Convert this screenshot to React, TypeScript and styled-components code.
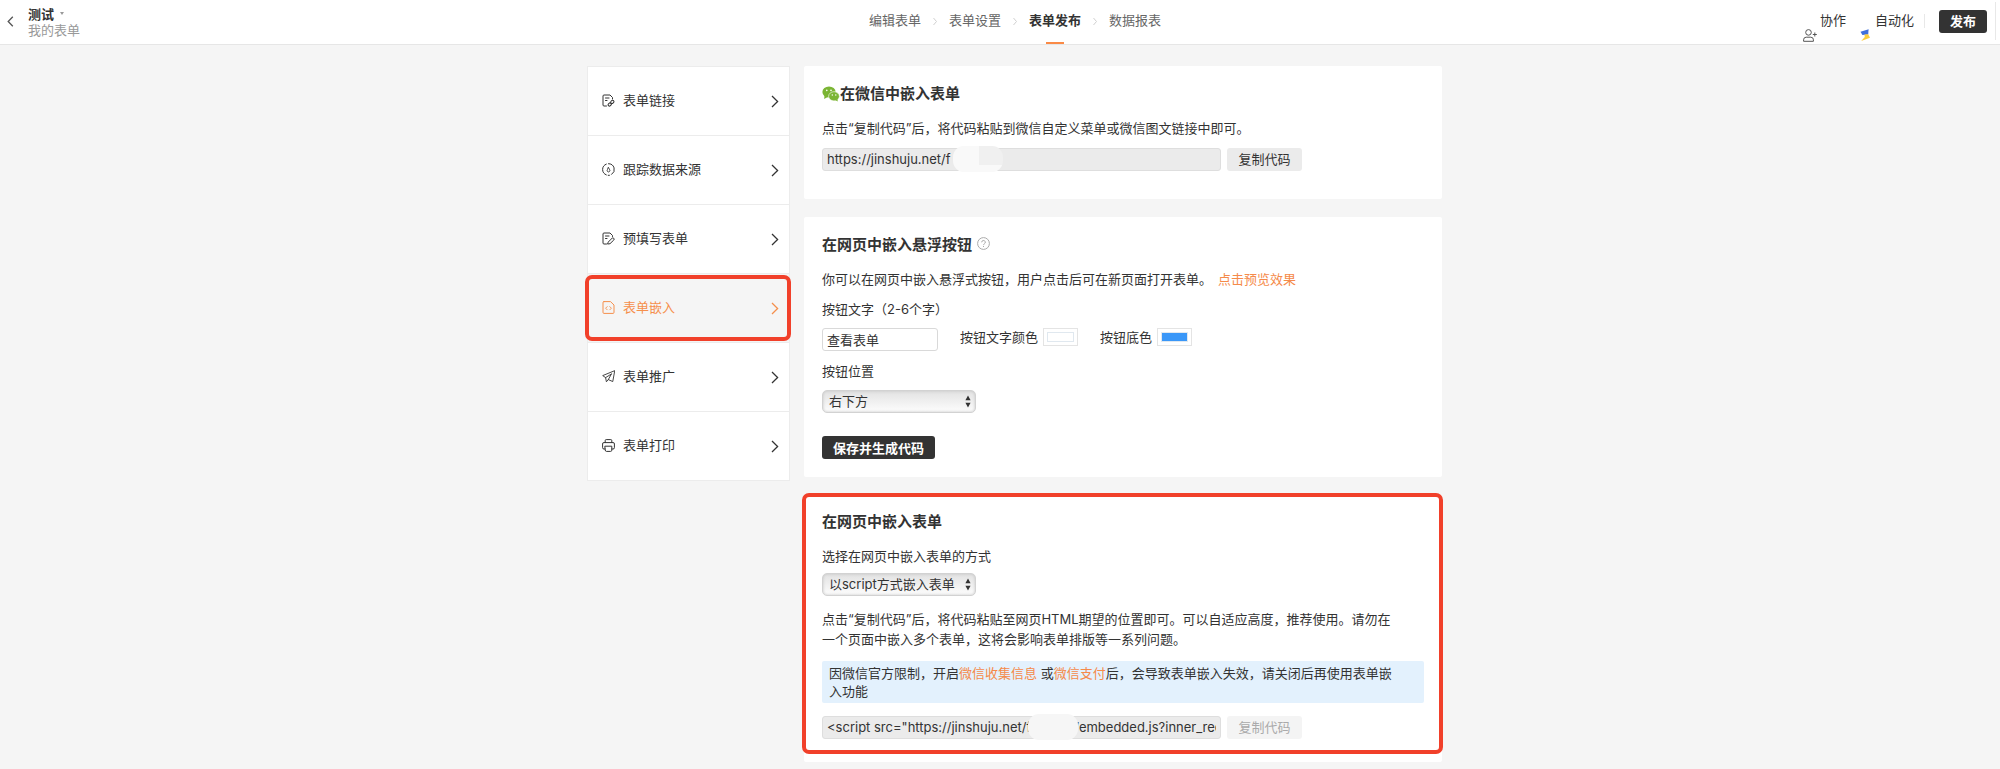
import React, { useState } from "react";
import styled, { createGlobalStyle, css } from "styled-components";

const GlobalStyle = createGlobalStyle`
  *, *::before, *::after { box-sizing: border-box; }
  body {
    margin: 0;
    background: #f5f5f5;
    color: #333;
    font: 13px/20px Inter, "Noto Sans CJK SC", sans-serif;
  }
  h1, h2, p { margin: 0; }
  button, input, select { font: inherit; color: inherit; }
  a { text-decoration: none; color: inherit; }
`;

const Header = styled.header`
  display: grid;
  grid-template-columns: 1fr auto 1fr;
  height: 45px;
  background: #fff;
  border-bottom: 1px solid #e6e6e6;
`;

const Brand = styled.div`
  display: flex;
  align-items: center;
  gap: 14px;
  padding: 0 0 1px 7px;
`;

const BackButton = styled.button`
  display: flex;
  padding: 0;
  border: 0;
  background: none;
  color: #555;
`;

const FormTitle = styled.h1`
  display: flex;
  align-items: center;
  gap: 6px;
  font-size: 13px;
  line-height: 16px;
  font-weight: 700;
`;

const Caret = styled.span`
  border: 2px solid transparent;
  border-top: 3px solid #999;
  border-bottom: 0;
`;

const Folder = styled.p`
  color: #999;
  line-height: 16px;
`;

const Steps = styled.nav`
  display: flex;
  gap: 12px;
  padding-left: 30px;
  color: #666;
`;

const Step = styled.a<{ $active?: boolean }>`
  position: relative;
  display: flex;
  align-items: center;
  height: 42px;
  padding-bottom: 2px;
  ${(p) =>
    p.$active &&
    css`
      color: #333;
      font-weight: 700;
      &::after {
        content: "";
        position: absolute;
        left: 50%;
        bottom: -2px;
        width: 18px;
        height: 2px;
        margin-left: -9px;
        background: #fa8a46;
      }
    `}
`;

const StepArrow = styled.svg`
  width: 4px;
  height: 42px;
`;

const Tools = styled.div`
  display: flex;
  align-items: center;
  justify-content: flex-end;
  height: 42px;
  padding-right: 4px;
`;

const Tool = styled.a`
  display: flex;
  align-items: center;
  gap: 3px;
  height: 42px;
  padding-bottom: 2px;
  margin-right: 10px;
  & + & { margin-left: 4px; }
  svg { margin-top: 30px; }
`;

const Divider = styled.span<{ $tall?: boolean }>`
  width: 1px;
  height: ${(p) => (p.$tall ? "38px" : "14px")};
  background: #e8e8e8;
`;

const DarkButton = styled.button`
  height: 23px;
  padding: 0 11px;
  border: 0;
  border-radius: 3px;
  background: #333;
  color: #fff;
  font-weight: 700;
  line-height: 22px;
`;

const PublishButton = styled(DarkButton)`
  margin: 0 8px 0 14px;
`;

const Page = styled.div`
  display: flex;
  justify-content: center;
  align-items: flex-start;
  gap: 14px;
  padding: 21px 0 7px 29px;
`;

const Sidebar = styled.nav`
  flex: 0 0 203px;
  background: #fff;
  border: 1px solid #ececec;
  border-top: 0;
`;

const SideItem = styled.a<{ $active?: boolean }>`
  position: relative;
  display: flex;
  align-items: center;
  gap: 8px;
  height: 69px;
  padding: 0 10px 2px 14px;
  border-top: 1px solid #ececec;
  color: ${(p) => (p.$active ? "#f58f4c" : "#333")};
  background: ${(p) => (p.$active ? "#f5f5f5" : "#fff")};
  ${(p) =>
    p.$active &&
    css`
      &::after {
        content: "";
        position: absolute;
        inset: 1px -2px 1px -3px;
        border: 4px solid #f1402a;
        border-radius: 7px;
      }
    `}
`;

const SideLabel = styled.span`
  flex: 1;
`;

const SideChevron = styled.svg`
  margin-top: 2px;
`;

const Main = styled.main`
  flex: 0 1 638px;
  display: flex;
  flex-direction: column;
  gap: 18px;
`;

const Card = styled.section<{ $bottom: number }>`
  position: relative;
  padding: 18px 18px ${(p) => p.$bottom}px;
  background: #fff;
  border-radius: 2px;
`;

const MarkedCard = styled(Card)`
  padding-top: 17px;
  &::after {
    content: "";
    position: absolute;
    inset: -2px -1px 8px -2px;
    border: 4px solid #f1402a;
    border-radius: 7px;
    pointer-events: none;
  }
`;

const CardTitle = styled.h2`
  display: flex;
  align-items: center;
  margin-bottom: 14px;
  font-size: 15px;
  line-height: 20px;
  font-weight: 700;
`;

const HelpButton = styled.button`
  display: flex;
  margin: 0 0 4px 5px;
  padding: 0;
  border: 0;
  background: none;
`;

const Text = styled.p`
  margin-bottom: 10px;
  padding-right: 22px;
`;

const Link = styled.a`
  color: #f58a4a;
`;

const PreviewLink = styled(Link)`
  margin-left: 6px;
`;

const Label = styled.label`
  display: block;
  width: fit-content;
`;

const CodeRow = styled.div`
  position: relative;
  display: flex;
  gap: 6px;
`;

const TextInput = styled.input`
  width: 116px;
  height: 23px;
  padding: 0 4px 1px;
  border: 1px solid #d9d9d9;
  border-radius: 3px;
  background: #fff;
`;

const CodeInput = styled(TextInput)`
  width: 399px;
  background: #ebebeb;
  border-color: #dedede;
`;

const Smudge = styled.span<{ $left: number; $patch?: boolean }>`
  position: absolute;
  top: -2px;
  left: ${(p) => p.$left}px;
  width: 50px;
  height: 26px;
  border-radius: 11px;
  background: ${(p) =>
    p.$patch ? "linear-gradient(#f0f0f0, #f0f0f0) 26px 0 / 24px 19px no-repeat #f9f9f9" : "#f6f6f6"};
`;

const CopyButton = styled.button`
  width: 75px;
  height: 23px;
  padding: 0 0 1px;
  border: 0;
  border-radius: 3px;
  background: #ebebeb;
  &:disabled { background: #f4f4f4; color: #aaa; }
`;

const Fields = styled.div`
  display: flex;
  gap: 22px;
  margin: 9px 0 10px;
`;

const ColorField = styled.label`
  display: flex;
  align-items: center;
  gap: 5px;
  height: 18px;
`;

const ColorInput = styled.input`
  appearance: none;
  width: 35px;
  height: 18px;
  padding: 3px;
  border: 1px solid #e4e4e4;
  background: #fff;
  &::-webkit-color-swatch-wrapper { padding: 0; }
  &::-webkit-color-swatch { border: 1px solid #e0e8ef; border-radius: 0; }
`;

const SelectBox = styled.div`
  position: relative;
  width: 154px;
  margin: 9px 0 23px;
  svg { position: absolute; right: 5px; top: 5px; pointer-events: none; }
`;

const MethodBox = styled(SelectBox)`
  margin: 7px 0 13px;
`;

const Select = styled.select`
  display: block;
  appearance: none;
  width: 100%;
  height: 23px;
  padding: 0 18px 1px 6px;
  border: 1px solid #d2d2d2;
  border-radius: 5px;
  background: linear-gradient(#e2e2e2, #fdfdfd);
  box-shadow: inset 0 0 3px #c4c4c4;
`;

const Notice = styled.p`
  margin: 12px 0 13px;
  padding: 3px 20px 3px 7px;
  border-radius: 2px;
  background: #e3f1fd;
  line-height: 18px;
`;

function Chevron() {
  return (
    <SideChevron width="8" height="13" viewBox="0 0 8 13" fill="none" stroke="currentColor" strokeWidth="1.3">
      <path d="M1 1l5.6 5.5L1 12" />
    </SideChevron>
  );
}

function UpDown() {
  return (
    <svg width="6" height="13" viewBox="0 0 6 13" fill="#333">
      <path d="M3 0.5L5.6 5.3H0.4zM3 12.5L5.6 7.7H0.4z" />
    </svg>
  );
}

const iconProps = {
  width: 13,
  height: 13,
  viewBox: "0 0 13 13",
  fill: "none",
  stroke: "currentColor",
  strokeWidth: 1,
  strokeLinecap: "round",
  strokeLinejoin: "round",
} as const;

const icons = {
  link: (
    <svg {...iconProps}>
      <path d="M4.5 12H2A1 1 0 0 1 1 11V2A1 1 0 0 1 2 1H8L10.5 3.5V5M3.5 4H7M3.5 6.5H5" />
      <rect x="8.6" y="6.6" width="3.4" height="2.6" rx="1.3" transform="rotate(-45 10.3 7.9)" />
      <rect x="6" y="9.2" width="3.4" height="2.6" rx="1.3" transform="rotate(-45 7.7 10.5)" />
    </svg>
  ),
  track: (
    <svg {...iconProps}>
      <path d="M4.3 1.1A5.8 5.8 0 0 0 4.3 11.9M6.5 0.7A5.8 5.8 0 0 1 9.6 11.4M6.2 12.3H7.4" />
      <path d="M6.5 4.6L7.7 6.8a1.4 1.4 0 1 1-2.4 0z" strokeWidth="0.9" />
    </svg>
  ),
  prefill: (
    <svg {...iconProps}>
      <path d="M4.5 12H2A1 1 0 0 1 1 11V2A1 1 0 0 1 2 1H8L10.5 3.5V4.5M3.5 4H7M3.5 6.5H5" />
      <path d="M6.3 10L10 6.3a1.2 1.2 0 0 1 1.8 1.7L8 11.7 6 12z" />
    </svg>
  ),
  embed: (
    <svg {...iconProps}>
      <path d="M2 0.6H8.5L12 4V11.4A1 1 0 0 1 11 12.4H2A1 1 0 0 1 1 11.4V1.6A1 1 0 0 1 2 0.6z" />
      <path d="M5.2 5.6L3.6 7.2 5.2 8.8M7.8 5.6L9.4 7.2 7.8 8.8" strokeWidth="0.9" />
    </svg>
  ),
  promote: (
    <svg {...iconProps} strokeWidth={0.9}>
      <path d="M12.4 0.8L0.7 5.6 3.6 7.6 4.4 11.8 6.3 9.6 10.4 11.4zM9.4 4L3.6 7.6M9.4 4L6.3 9.6" />
    </svg>
  ),
  print: (
    <svg {...iconProps}>
      <path d="M3.2 3.6V1.6a1 1 0 0 1 1-1H8.8a1 1 0 0 1 1 1V3.6M3.2 10H2A1.3 1.3 0 0 1 0.6 8.7V5A1.3 1.3 0 0 1 2 3.6H11A1.3 1.3 0 0 1 12.4 5V8.7A1.3 1.3 0 0 1 11 10H9.8" />
      <path d="M3.2 7.2H9.8V11.2a1.2 1.2 0 0 1-1.2 1.2H4.4a1.2 1.2 0 0 1-1.2-1.2z" />
    </svg>
  ),
};

const menu = [
  { icon: icons.link, label: "表单链接" },
  { icon: icons.track, label: "跟踪数据来源" },
  { icon: icons.prefill, label: "预填写表单" },
  { icon: icons.embed, label: "表单嵌入", active: true },
  { icon: icons.promote, label: "表单推广" },
  { icon: icons.print, label: "表单打印" },
];

const steps = ["编辑表单", "表单设置", "表单发布", "数据报表"];

export default function App() {
  const [caption, setCaption] = useState("查看表单");
  const [textColor, setTextColor] = useState("#ffffff");
  const [fillColor, setFillColor] = useState("#3a97f8");

  return (
    <>
      <GlobalStyle />
      <Header>
        <Brand>
          <BackButton aria-label="返回">
            <svg width="7" height="11" viewBox="0 0 7 11" fill="none" stroke="currentColor" strokeWidth="1.3">
              <path d="M5.8 0.8L1.2 5.5l4.6 4.7" />
            </svg>
          </BackButton>
          <div>
            <FormTitle>测试<Caret /></FormTitle>
            <Folder>我的表单</Folder>
          </div>
        </Brand>
        <Steps>
          {steps.map((step, i) => (
            <React.Fragment key={step}>
              {i > 0 && (
                <StepArrow viewBox="0 0 4 42" fill="none" stroke="#d0d0d0">
                  <path d="M0.5 18L3.5 21.5 0.5 25" />
                </StepArrow>
              )}
              <Step href="#" $active={i === 2}>{step}</Step>
            </React.Fragment>
          ))}
        </Steps>
        <Tools>
          <Tool href="#">
            <svg width="14" height="13" viewBox="0 0 14 13" fill="none" stroke="#555">
              <circle cx="5.5" cy="3.4" r="2.8" />
              <path d="M0.6 12.3V10.8A2.6 2.6 0 0 1 3.2 8.2H7.8A2.6 2.6 0 0 1 10.4 10.8V12.3zM9.8 5.5H13.8M11.8 3.5V7.5" />
            </svg>
            协作
          </Tool>
          <Tool href="#">
            <svg width="12" height="12" viewBox="0 0 12 12">
              <path d="M0.5 2.8L8.6 0.2 8.2 5.6 2.4 6z" fill="#3f6fdc" />
              <path d="M4.4 5.4L8.2 5.2 10 8.8 1.2 12 4.8 8z" fill="#fbcd3e" />
            </svg>
            自动化
          </Tool>
          <Divider />
          <PublishButton>发布</PublishButton>
          <Divider $tall />
        </Tools>
      </Header>
      <Page>
        <Sidebar>
          {menu.map((item) => (
            <SideItem key={item.label} href="#" $active={item.active}>
              {item.icon}
              <SideLabel>{item.label}</SideLabel>
              <Chevron />
            </SideItem>
          ))}
        </Sidebar>
        <Main>
          <Card $bottom={28}>
            <CardTitle>
              <svg width="18" height="16" viewBox="0 0 18 16">
                <ellipse cx="7" cy="6" rx="6.6" ry="5.5" fill="#7bb534" />
                <path d="M2.5 9.5L2.2 13 5.5 11z" fill="#7bb534" />
                <ellipse cx="12" cy="10.3" rx="5.4" ry="4.6" fill="#7bb534" stroke="#fff" strokeWidth="0.6" />
                <path d="M13 14l2.8 1.6-.4-2.6z" fill="#7bb534" />
                <g fill="#fff">
                  <circle cx="4.8" cy="4.4" r="0.8" />
                  <circle cx="9" cy="4.4" r="0.8" />
                  <circle cx="10.3" cy="9" r="0.7" />
                  <circle cx="13.8" cy="9" r="0.7" />
                </g>
              </svg>
              在微信中嵌入表单
            </CardTitle>
            <Text>点击“复制代码”后，将代码粘贴到微信自定义菜单或微信图文链接中即可。</Text>
            <CodeRow>
              <CodeInput aria-label="微信链接" readOnly value="https://jinshuju.net/f" />
              <Smudge $left={131} $patch />
              <CopyButton>复制代码</CopyButton>
            </CodeRow>
          </Card>
          <Card $bottom={18}>
            <CardTitle>
              在网页中嵌入悬浮按钮
              <HelpButton aria-label="帮助">
                <svg width="13" height="13" viewBox="0 0 13 13" fill="none" stroke="#aaa">
                  <circle cx="6.5" cy="6.5" r="5.9" />
                  <path d="M4.7 5.3a1.8 1.8 0 1 1 2.6 1.6q-.8.4-.8 1.2M6.5 9v1" />
                </svg>
              </HelpButton>
            </CardTitle>
            <Text>
              你可以在网页中嵌入悬浮式按钮，用户点击后可在新页面打开表单。
              <PreviewLink href="#">点击预览效果</PreviewLink>
            </Text>
            <Label htmlFor="caption">按钮文字（2-6个字）</Label>
            <Fields>
              <TextInput id="caption" value={caption} onChange={(e) => setCaption(e.target.value)} />
              <ColorField>
                按钮文字颜色
                <ColorInput type="color" value={textColor} onChange={(e) => setTextColor(e.target.value)} />
              </ColorField>
              <ColorField>
                按钮底色
                <ColorInput type="color" value={fillColor} onChange={(e) => setFillColor(e.target.value)} />
              </ColorField>
            </Fields>
            <Label htmlFor="position">按钮位置</Label>
            <SelectBox>
              <Select id="position"><option>右下方</option></Select>
              <UpDown />
            </SelectBox>
            <DarkButton>保存并生成代码</DarkButton>
          </Card>
          <MarkedCard $bottom={23}>
            <CardTitle>在网页中嵌入表单</CardTitle>
            <Label htmlFor="method">选择在网页中嵌入表单的方式</Label>
            <MethodBox>
              <Select id="method"><option>以script方式嵌入表单</option></Select>
              <UpDown />
            </MethodBox>
            <Text>
              点击“复制代码”后，将代码粘贴至网页HTML期望的位置即可。可以自适应高度，推荐使用。请勿在一个页面中嵌入多个表单，这将会影响表单排版等一系列问题。
            </Text>
            <Notice>
              因微信官方限制，开启<Link href="#">微信收集信息</Link> 或<Link href="#">微信支付</Link>后，会导致表单嵌入失效，请关闭后再使用表单嵌入功能
            </Notice>
            <CodeRow>
              <CodeInput
                aria-label="嵌入代码"
                readOnly
                value={'<script src="https://jinshuju.net/f/xxxxxi/embedded.js?inner_redirect=false'}
              />
              <Smudge $left={206} />
              <CopyButton disabled>复制代码</CopyButton>
            </CodeRow>
          </MarkedCard>
        </Main>
      </Page>
    </>
  );
}
